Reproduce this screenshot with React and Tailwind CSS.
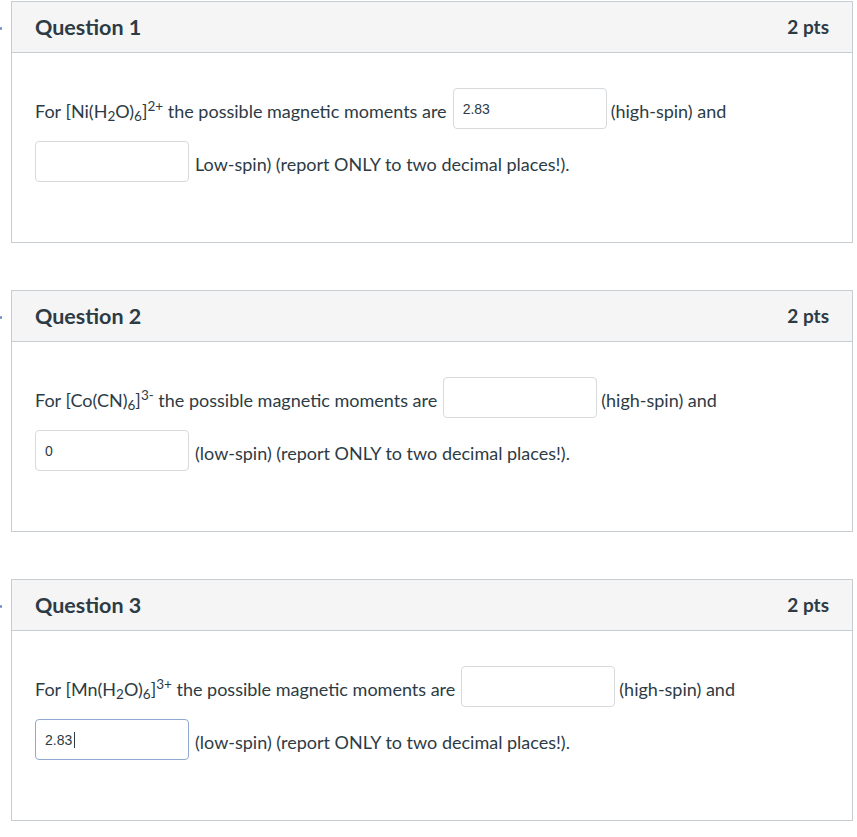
import React from 'react';

const font = { fontFamily: 'Lato, "Noto Sans", sans-serif' };

function Box({ value = '', focused = false }) {
  return (
    <span className="relative inline-flex">
      <input
        readOnly
        value={value}
        className={`w-[154px] h-[41px] rounded-[4px] bg-white px-[9px] text-[14px] text-[#2d3b45] outline-none border ${
          focused ? 'border-[#8fa9d3]' : 'border-[#d6dadd]'
        }`}
        style={{ fontFamily: '"Liberation Sans", Arial, sans-serif' }}
      />
      {focused && (
        <span className="absolute left-[39px] top-[13px] h-[16px] w-px bg-[#2d3b45]" />
      )}
    </span>
  );
}

function Card({ num, formula, first, second, lowLabel }) {
  return (
    <div className="relative border border-[#c7cdd1] bg-white">
      {/* little marker left of the card */}
      <span className="absolute -left-[12px] top-[25px] h-[3px] w-[2px] bg-[#6b8fc4] rounded-full" />
      <div className="h-[51px] bg-[#f5f5f5] border-b border-[#c7cdd1] flex items-center justify-between pl-[23px] pr-[23px]">
        <h2 className="text-[21.5px] font-bold text-[#2d3b45]">Question {num}</h2>
        <span className="text-[19px] font-bold text-[#2d3b45]">2 pts</span>
      </div>
      <div className="pt-[35px] pb-[60px] pl-[23px] text-[18px] text-[#2d3b45] flex flex-col gap-[12px]">
        <div className="flex items-center">
          <span className="pt-[6px]">For {formula} the possible magnetic moments are</span>
          <span className="ml-[6px]"><Box value={first} /></span>
          <span className="ml-[4px] pt-[6px]">(high-spin) and</span>
        </div>
        <div className="flex items-center">
          <Box value={second.value} focused={second.focused} />
          <span className="ml-[6px] pt-[6px]">{lowLabel} (report ONLY to two decimal places!).</span>
        </div>
      </div>
    </div>
  );
}

export default function App() {
  return (
    <div className="min-h-screen bg-white pl-[11px] pr-[4px] pt-[1px]" style={font}>
      <div className="flex flex-col gap-[47px]">
        <Card
          num={1}
          formula={<>[Ni(H<sub>2</sub>O)<sub>6</sub>]<sup>2+</sup></>}
          first="2.83"
          second={{ value: '' }}
          lowLabel="Low-spin)"
        />
        <Card
          num={2}
          formula={<>[Co(CN)<sub>6</sub>]<sup>3-</sup></>}
          first=""
          second={{ value: '0' }}
          lowLabel="(low-spin)"
        />
        <Card
          num={3}
          formula={<>[Mn(H<sub>2</sub>O)<sub>6</sub>]<sup>3+</sup></>}
          first=""
          second={{ value: '2.83', focused: true }}
          lowLabel="(low-spin)"
        />
      </div>
    </div>
  );
}
